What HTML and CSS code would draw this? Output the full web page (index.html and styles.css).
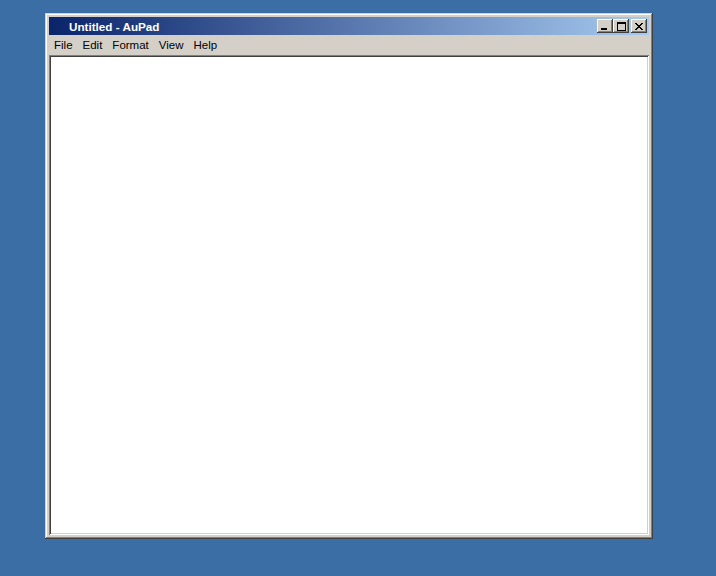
FILE: index.html
```html
<!DOCTYPE html>
<html lang="en">
<head>
    <meta charset="UTF-8">
    <title>Untitled - AuPad</title>
    <link rel="stylesheet" href="styles.css">
</head>
<body>
    <div class="window">
        <div class="title-bar">
            <span class="title">Untitled - AuPad</span>
            <div class="caption-btns">
                <button class="cap-btn">
                    <svg width="8" height="7" viewBox="0 0 8 7" shape-rendering="crispEdges"><rect x="0" y="5" width="6" height="2" fill="#000"/></svg>
                </button>
                <button class="cap-btn">
                    <svg width="9" height="9" viewBox="0 0 9 9" shape-rendering="crispEdges"><path d="M0 0h9v2H0z M0 0h1v9H0z M8 0h1v9H8z M0 8h9v1H0z" fill="#000"/></svg>
                </button>
                <button class="cap-btn close-btn">
                    <svg width="8" height="7" viewBox="0 0 8 7" shape-rendering="crispEdges"><path d="M0 0h2v1H0zM6 0h2v1H6zM1 1h2v1H1zM5 1h2v1H5zM2 2h4v1H2zM3 3h2v1H3zM2 4h4v1H2zM1 5h2v1H1zM5 5h2v1H5zM0 6h2v1H0zM6 6h2v1H6z" fill="#000"/></svg>
                </button>
            </div>
        </div>
        <div class="menu-bar">
            <span class="menu-item">File</span>
            <span class="menu-item">Edit</span>
            <span class="menu-item">Format</span>
            <span class="menu-item">View</span>
            <span class="menu-item">Help</span>
        </div>
        <textarea class="editor" spellcheck="false"></textarea>
    </div>
</body>
</html>
```

FILE: styles.css
```css
*{
    box-sizing: border-box;
}
body{
    margin: 0;
    padding: 13px 0 0 45px;
    background-color: #3a6ea5;
    font-family: "Liberation Sans", Arial, sans-serif;
    font-size: 11px;
}
.window{
    display: flex;
    flex-direction: column;
    width: 608px;
    height: 526px;
    padding: 4px;
    background-color: #d4d0c8;
    box-shadow: inset -1px -1px #404040, inset 1px 1px #d4d0c8,
                inset -2px -2px #808080, inset 2px 2px #ffffff;
}
.title-bar{
    display: flex;
    align-items: center;
    justify-content: space-between;
    height: 18px;
    padding: 0 2px 0 20px;
    background: linear-gradient(to right, #0a246a, #a6caf0);
}
.title{
    color: white;
    font-weight: bold;
    font-size: 11.7px;
}
.caption-btns{
    display: flex;
}
.cap-btn{
    display: flex;
    align-items: center;
    justify-content: center;
    width: 16px;
    height: 14px;
    padding: 0;
    border: none;
    background-color: #d4d0c8;
    box-shadow: inset -1px -1px #404040, inset 1px 1px #ffffff,
                inset -2px -2px #808080, inset 2px 2px #d4d0c8;
}
.close-btn{
    margin-left: 2px;
}
.menu-bar{
    display: flex;
    align-items: center;
    height: 19px;
}
.menu-item{
    padding: 0 5px;
    color: black;
    font-size: 11.5px;
}
.editor{
    flex: 1;
    width: 100%;
    margin: 1px 0 0 0;
    resize: none;
    outline: none;
    background-color: white;
    border: none;
    box-shadow: inset 1px 1px #808080, inset -1px -1px #ffffff,
                inset 2px 2px #404040, inset -2px -2px #d4d0c8;
}
```
